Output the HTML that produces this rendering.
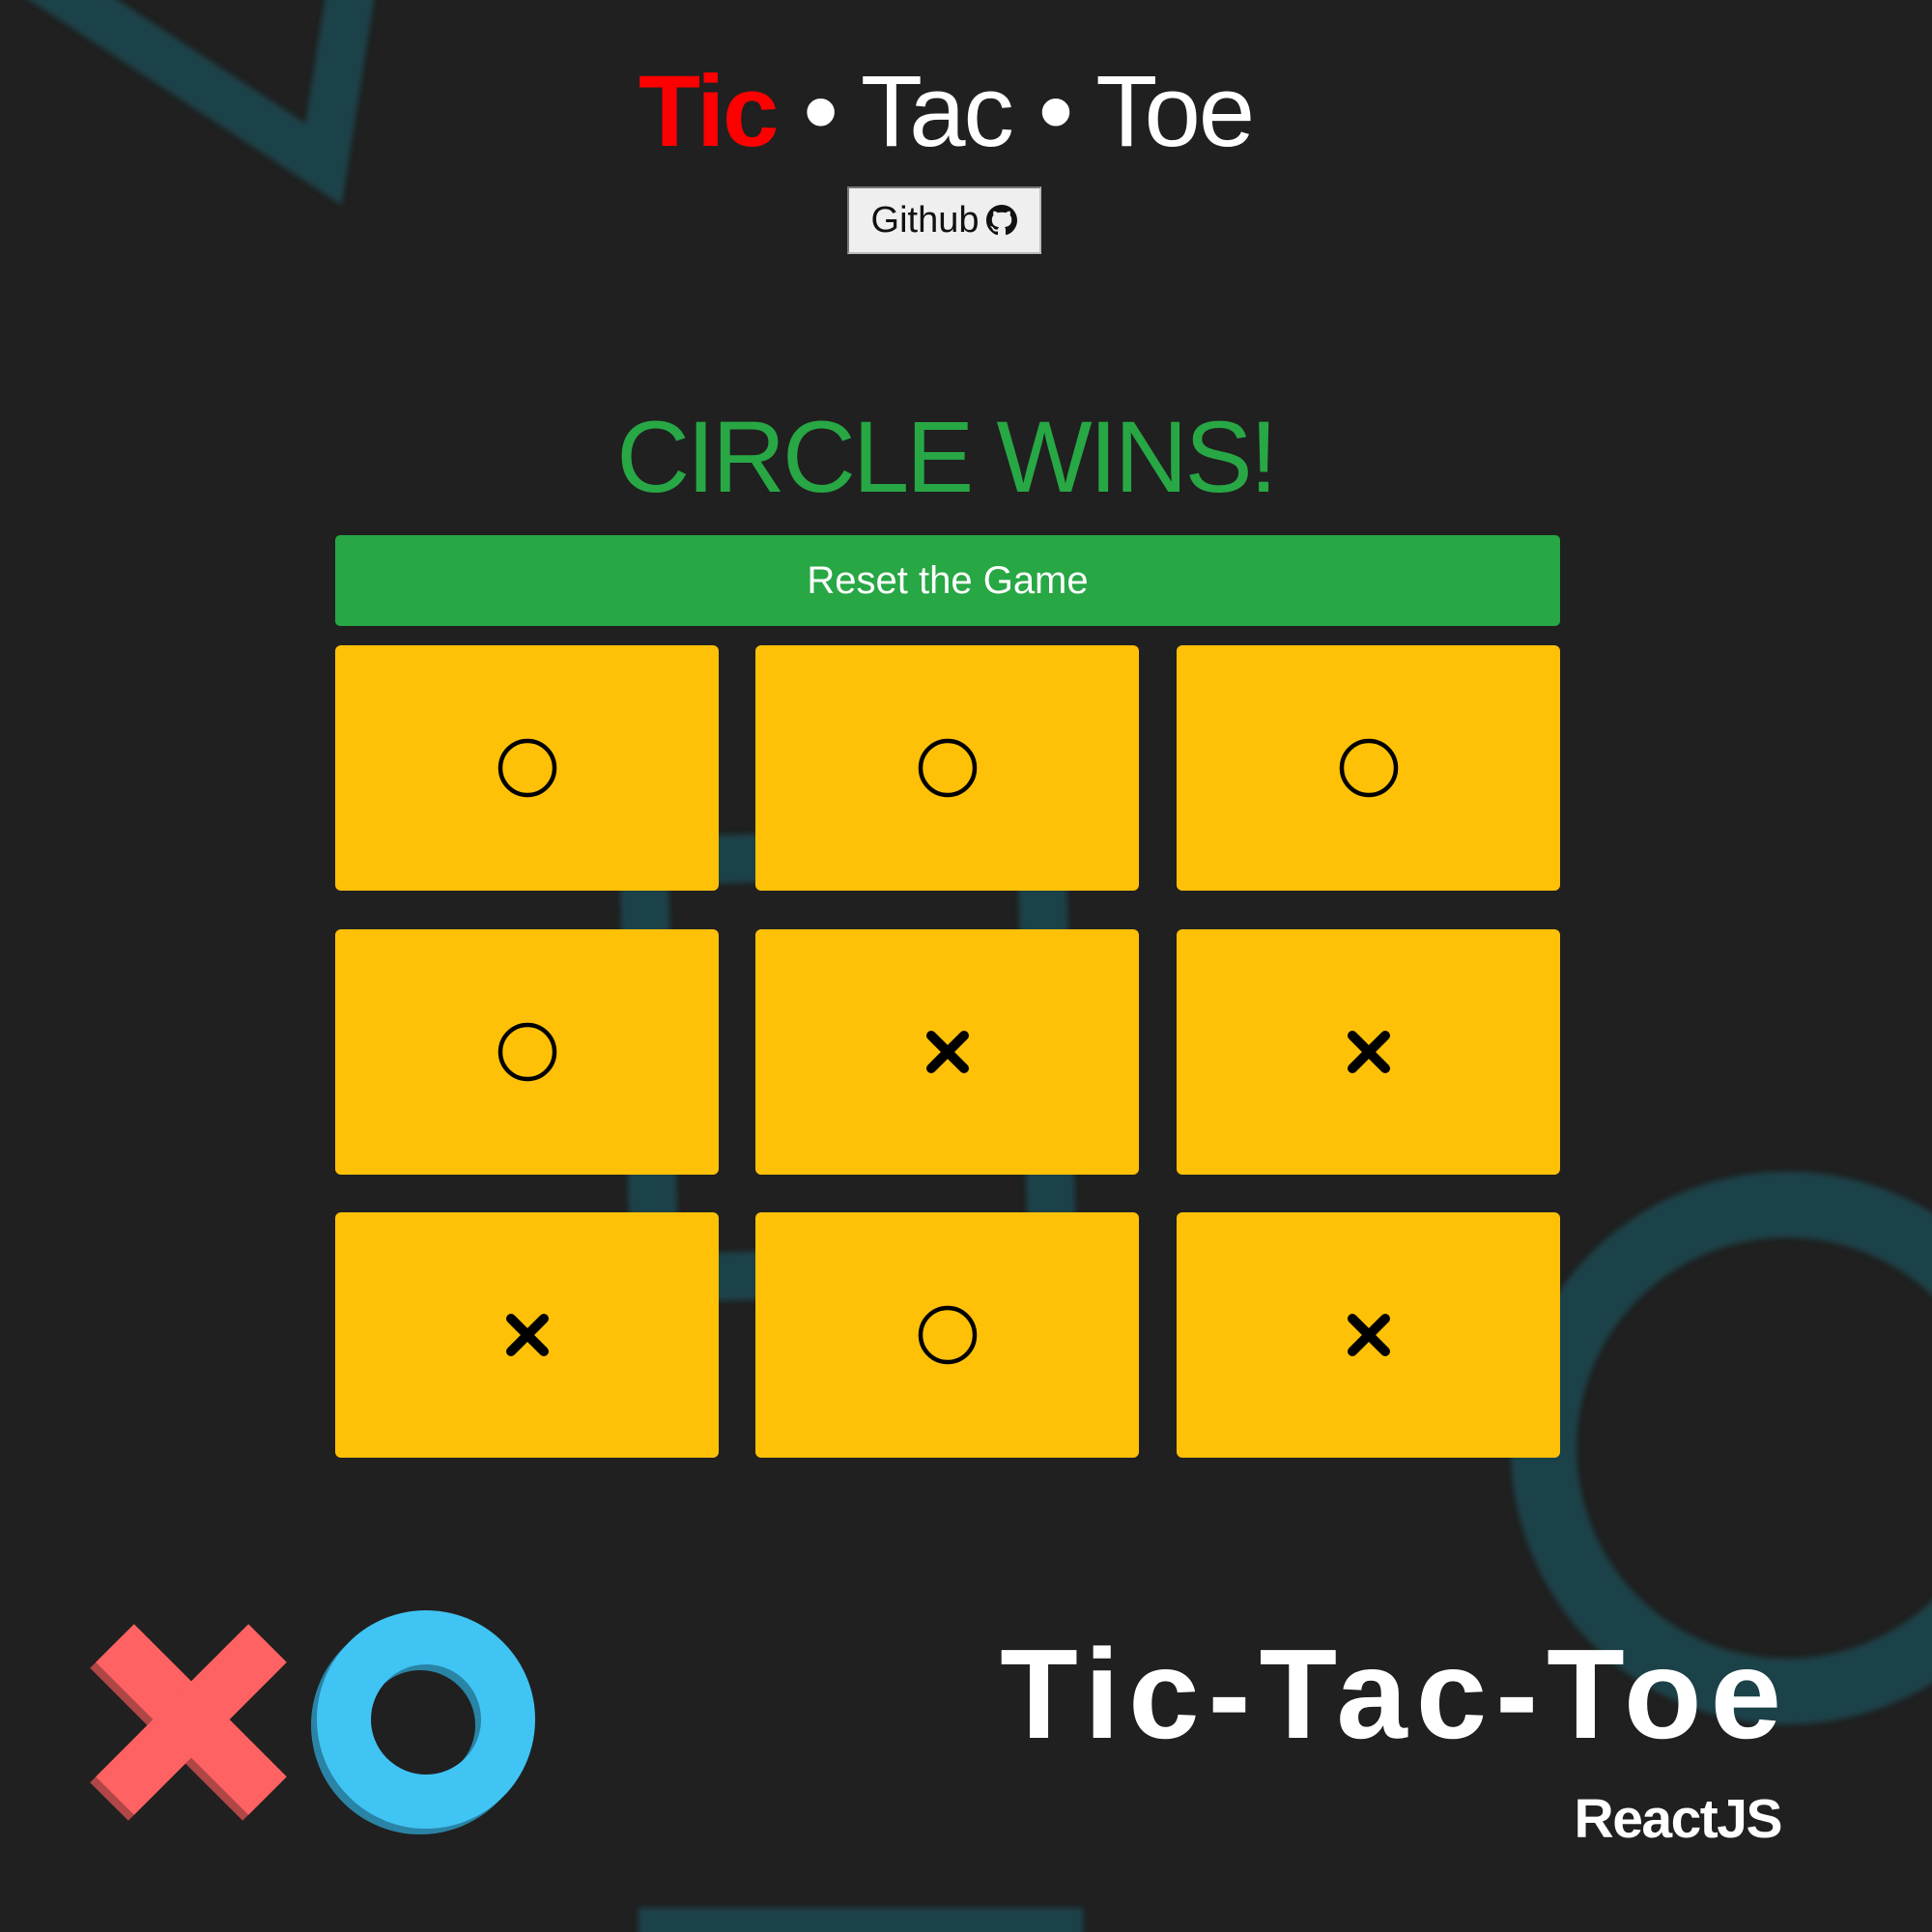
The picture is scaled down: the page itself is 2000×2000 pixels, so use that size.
<!DOCTYPE html>
<html><head><meta charset="utf-8"><style>
html,body{margin:0;padding:0;}
body{width:2000px;height:2000px;background:#202020;position:relative;overflow:hidden;font-family:"Liberation Sans",sans-serif;}
.abs{position:absolute;}
.cell{position:absolute;width:397px;height:254px;background:#ffc107;border-radius:6px;display:flex;align-items:center;justify-content:center;}
</style></head><body>
<svg class="abs" style="left:0;top:0" width="2000" height="2000">
<defs><filter id="b"><feGaussianBlur stdDeviation="3"/></filter></defs>
<g filter="url(#b)" fill="none" stroke="#1c4349" stroke-width="50">
<polyline points="0,-50 335,170 368,-40" stroke-linejoin="miter"/>
<rect x="672" y="886" width="412" height="432" transform="rotate(-1.5 878 1100)"/>
<circle cx="1850" cy="1499" r="252" stroke-width="68"/>
<rect x="661" y="1975" width="460" height="60" fill="#1c4349" stroke="none"/>
</g>
<g stroke-width="56" stroke-linecap="butt">
<line x1="113" y1="1707" x2="271" y2="1865" stroke="#b04646"/>
<line x1="271" y1="1707" x2="113" y2="1865" stroke="#b04646"/>
<line x1="119" y1="1701" x2="277" y2="1859" stroke="#ff6262"/>
<line x1="277" y1="1701" x2="119" y2="1859" stroke="#ff6262"/>
</g>
<circle cx="435" cy="1786" r="85" fill="none" stroke="#2a84a6" stroke-width="56"/>
<circle cx="441" cy="1780" r="85" fill="none" stroke="#40c4f4" stroke-width="56"/>
</svg>

<div class="abs" style="left:0;width:1958px;top:63px;font-size:105px;line-height:105px;text-align:center;color:#fff;letter-spacing:-2.2px;white-space:nowrap"><b style="color:#ff0000">Tic</b> • Tac • Toe</div>

<div class="abs" style="left:877px;top:193px;width:197px;height:66px;background:#efefef;border-top:2px solid #777;border-left:2px solid #777;border-right:2px solid #bbb;border-bottom:2px solid #bbb;display:flex;align-items:center;justify-content:center;font-size:38px;color:#111;">Github<svg width="32" height="32" viewBox="0 0 16 16" style="margin-left:8px"><path fill="#111" d="M8 0C3.58 0 0 3.58 0 8c0 3.54 2.29 6.53 5.47 7.59.4.07.55-.17.55-.38 0-.19-.01-.82-.01-1.49-2.01.37-2.53-.49-2.69-.94-.09-.23-.48-.94-.82-1.130-.28-.15-.68-.52-.01-.53.63-.01 1.08.58 1.23.82.72 1.21 1.87.87 2.33.66.07-.52.28-.87.51-1.07-1.78-.2-3.64-.89-3.64-3.95 0-.87.31-1.59.82-2.15-.08-.2-.36-1.02.08-2.12 0 0 .67-.21 2.2.82.64-.18 1.32-.27 2-.27.68 0 1.36.09 2 .27 1.53-1.04 2.2-.82 2.2-.82.44 1.1.16 1.92.08 2.12.51.56.82 1.27.82 2.15 0 3.07-1.87 3.75-3.65 3.95.29.25.54.73.54 1.48 0 1.07-.01 1.93-.01 2.2 0 .21.15.46.55.38A8.013 8.013 0 0016 8c0-4.42-3.58-8-8-8z"/></svg></div>

<div class="abs" style="left:0;width:1958px;top:421px;font-size:105px;line-height:105px;text-align:center;color:#28a745;letter-spacing:-3px;white-space:nowrap">CIRCLE WINS!</div>

<div class="abs" style="left:347px;top:554px;width:1268px;height:94px;background:#28a745;border-radius:5px;display:flex;align-items:center;justify-content:center;color:#fff;font-size:40px;">Reset the Game</div>

<div class="cell" style="left:347px;top:668px"><svg width="64" height="64"><circle cx="32" cy="32" r="28" fill="none" stroke="#000" stroke-width="4.5"/></svg></div>
<div class="cell" style="left:782px;top:668px"><svg width="64" height="64"><circle cx="32" cy="32" r="28" fill="none" stroke="#000" stroke-width="4.5"/></svg></div>
<div class="cell" style="left:1218px;top:668px"><svg width="64" height="64"><circle cx="32" cy="32" r="28" fill="none" stroke="#000" stroke-width="4.5"/></svg></div>
<div class="cell" style="left:347px;top:962px"><svg width="64" height="64"><circle cx="32" cy="32" r="28" fill="none" stroke="#000" stroke-width="4.5"/></svg></div>
<div class="cell" style="left:782px;top:962px"><svg width="50" height="50"><path d="M8 8L42 42M42 8L8 42" stroke="#000" stroke-width="10" stroke-linecap="round"/></svg></div>
<div class="cell" style="left:1218px;top:962px"><svg width="50" height="50"><path d="M8 8L42 42M42 8L8 42" stroke="#000" stroke-width="10" stroke-linecap="round"/></svg></div>
<div class="cell" style="left:347px;top:1255px"><svg width="50" height="50"><path d="M8 8L42 42M42 8L8 42" stroke="#000" stroke-width="10" stroke-linecap="round"/></svg></div>
<div class="cell" style="left:782px;top:1255px"><svg width="64" height="64"><circle cx="32" cy="32" r="28" fill="none" stroke="#000" stroke-width="4.5"/></svg></div>
<div class="cell" style="left:1218px;top:1255px"><svg width="50" height="50"><path d="M8 8L42 42M42 8L8 42" stroke="#000" stroke-width="10" stroke-linecap="round"/></svg></div>

<div class="abs" style="right:156px;top:1688px;font-size:132px;line-height:132px;font-weight:bold;color:#fff;letter-spacing:9px;white-space:nowrap;margin-right:-9px">Tic-Tac-Toe</div>
<div class="abs" style="right:156px;top:1855px;font-size:57px;line-height:57px;font-weight:bold;color:#fff;letter-spacing:-1.5px;white-space:nowrap">ReactJS</div>
</body></html>
